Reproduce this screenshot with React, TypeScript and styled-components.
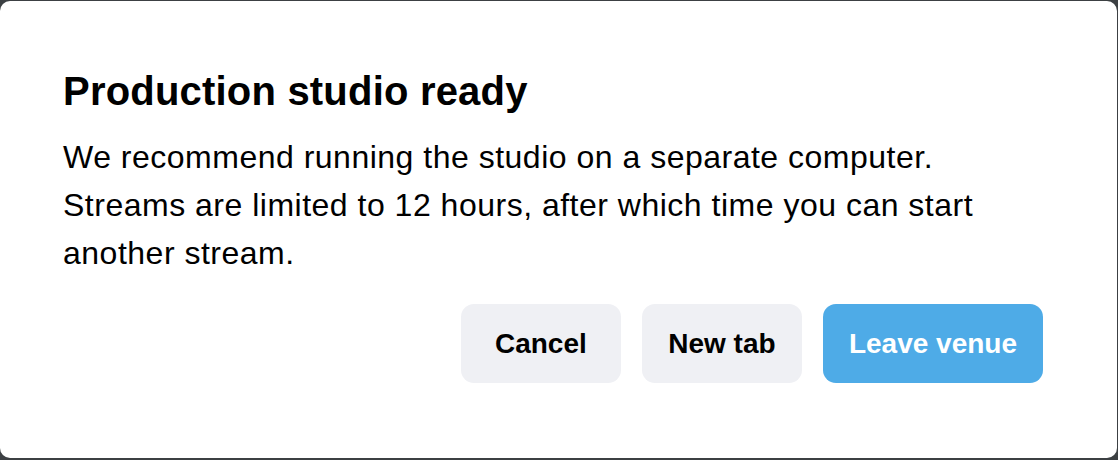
import styled, { createGlobalStyle } from "styled-components";

const GlobalStyle = createGlobalStyle`
    html, body {
        margin: 0;
        padding: 0;
        background: #3c4043;
    }
    body {
        font-family: "Liberation Sans", Arial, sans-serif;
        -webkit-font-smoothing: antialiased;
    }
`

const Page = styled.div`
    width: 1118px;
    height: 460px;
    padding-top: 1px;
    box-sizing: border-box;
`

const Dialog = styled.div`
    width: 1117px;
    height: 457px;
    box-sizing: border-box;
    background: #ffffff;
    border-radius: 10px;
    padding: 70px 74px 0 63px;
    display: flex;
    flex-direction: column;
`

const Title = styled.h1`
    margin: 0;
    font-size: 40px;
    line-height: 40px;
    font-weight: 700;
    letter-spacing: 0.2px;
    color: #000;
`

const Message = styled.p`
    margin: 22px 0 0;
    font-size: 32px;
    line-height: 48px;
    letter-spacing: 0.5px;
    color: #000;
`

const Actions = styled.div`
    margin-top: 27px;
    display: flex;
    justify-content: flex-end;
    gap: 21px;
`

const Button = styled.button<{ $primary?: boolean }>`
    height: 79px;
    min-width: 160px;
    padding: 0 26px;
    border: none;
    border-radius: 13px;
    font-family: "Liberation Sans", Arial, sans-serif;
    font-size: 28px;
    font-weight: 700;
    cursor: pointer;
    background: ${(p) => (p.$primary ? "#4eabe7" : "#eff0f4")};
    color: ${(p) => (p.$primary ? "#ffffff" : "#000000")};
`

const App = () => {
    return (
        <>
            <GlobalStyle />
            <Page>
                <Dialog>
                    <Title>Production studio ready</Title>
                    <Message>
                        We recommend running the studio on a separate computer.
                        <br />
                        Streams are limited to 12 hours, after which time you can start another stream.
                    </Message>
                    <Actions>
                        <Button>Cancel</Button>
                        <Button>New tab</Button>
                        <Button $primary>Leave venue</Button>
                    </Actions>
                </Dialog>
            </Page>
        </>
    )
}

export default App;
